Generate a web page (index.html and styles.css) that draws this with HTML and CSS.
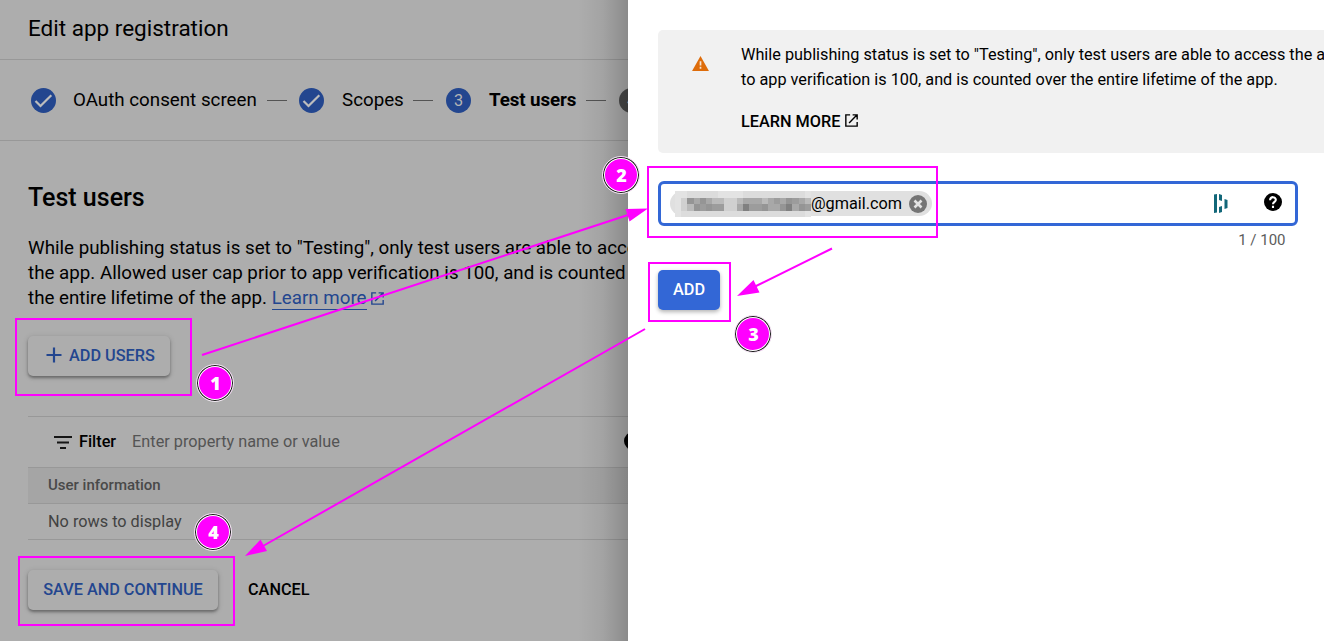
FILE: index.html
```html
<!DOCTYPE html>
<html lang="en">
<head>
<meta charset="utf-8">
<title>Edit app registration</title>
<link rel="stylesheet" href="styles.css">
</head>
<body>
<div class="screen">
  <main class="page">
    <header class="page-header"><h1 class="title">Edit app registration</h1></header>
    <nav class="stepper">
      <svg class="step-dot" viewBox="0 0 25 25"><circle cx="12.5" cy="12.5" r="12.5" fill="#23468f"/><path d="M4.5 13l5 5L20.3 7.2" fill="none" stroke="#bdbdbd" stroke-width="2.2"/></svg>
      <span class="step-label oauth">OAuth consent screen</span><i class="dash"></i>
      <svg class="step-dot" viewBox="0 0 25 25"><circle cx="12.5" cy="12.5" r="12.5" fill="#23468f"/><path d="M4.5 13l5 5L20.3 7.2" fill="none" stroke="#bdbdbd" stroke-width="2.2"/></svg>
      <span class="step-label scopes">Scopes</span><i class="dash"></i>
      <span class="step-dot number">3</span>
      <span class="step-label current">Test users</span><i class="dash"></i>
      <span class="step-dot number next">4</span>
    </nav>
    <section class="content">
      <h2 class="heading">Test users</h2>
      <p class="intro">While publishing status is set to "Testing", only test users are able to access<br>the app. Allowed user cap prior to app verification is 100, and is counted<br>the entire lifetime of the app. <a class="link">Learn more</a> <svg class="ext" viewBox="0 0 14 14"><path d="M5.5.9H.9v12.2h12.2V8.6M8.2.9h4.9v4.9M12.8 1.2L4.4 9.6" fill="none" stroke="currentColor" stroke-width="1.5"/></svg></p>
      <button class="btn raised add-users"><svg class="plus" viewBox="0 0 16 16"><path d="M8 .5v15M.5 8h15" stroke="currentColor" stroke-width="2.2"/></svg>ADD USERS</button>
      <div class="table">
        <div class="filter-row">
          <svg class="filter-icon" viewBox="0 0 18 13"><path d="M0 1h18M3 6.5h12M6 12h6" stroke="#151515" stroke-width="2"/></svg>
          <b class="filter-label">Filter</b><span class="filter-hint">Enter property name or value</span><i class="filter-help"></i>
        </div>
        <div class="table-head">User information</div>
        <div class="table-row">No rows to display</div>
      </div>
      <div class="actions"><button class="btn raised save">SAVE AND CONTINUE</button><button class="btn cancel">CANCEL</button></div>
    </section>
    <div class="edge-shadow"></div>
  </main>
  <aside class="panel">
    <div class="notice">
      <svg class="warn" viewBox="0 0 18 16"><path d="M9 0l9 16H0z" fill="#de6c0a"/><path d="M9 5.5v4.5M9 11.4v2.2" stroke="#f8e3d0" stroke-width="1.8"/></svg>
      <div class="notice-body">
        <p class="notice-text">While publishing status is set to "Testing", only test users are able to access the app. The user cap prior<br>to app verification is 100, and is counted over the entire lifetime of the app.</p>
        <a class="learn">LEARN MORE <svg class="ext" viewBox="0 0 14 14"><path d="M5.5.9H.9v12.2h12.2V8.6M8.2.9h4.9v4.9M12.8 1.2L4.4 9.6" fill="none" stroke="currentColor" stroke-width="1.5"/></svg></a>
      </div>
    </div>
    <div class="field">
      <div class="chip">
        <svg class="mosaic" viewBox="0 0 22 4" preserveAspectRatio="none" shape-rendering="crispEdges">
          <path d="M0 0h22v4H0z" fill="#e3e3e3"/><path d="M2 0h5v1H2zM11 0h10v1H11zM1 3h20v1H1z" fill="#dcdcdc"/>
          <path d="M1 1h1v2H1zM8 1h2v2H8z" fill="#d0d0d0"/>
          <path d="M2 1h6v2H2zM10 1h12v2H10z" fill="#a8a8a8"/>
          <path d="M2 1h1v1H2zM4 1h1v1H4zM3 2h1v1H3zM5 2h1v1H5zM14 2h1v1H14zM18 1h1v1H18zM17 2h1v1H17zM20 2h1v1H20z" fill="#959595"/>
          <path d="M4 2h1v1H4zM6 2h2v1H6zM12 2h2v1H12zM16 1h1v1H16zM19 1h1v1H19zM21 2h1v1H21z" fill="#9c9c9c"/>
          <path d="M11 2h1v1H11zM18 2h1v1H18z" fill="#808080"/>
          <path d="M2 2h1v1H2zM6 1h2v1H6zM10 1h1v1H10zM14 1h1v1H14zM21 1h1v1H21z" fill="#bababa"/>
        </svg>
        <span class="mail">@gmail.com</span>
        <svg class="remove" viewBox="0 0 18 18"><circle cx="9" cy="9" r="9" fill="#757575"/><path d="M5.5 5.5l7 7M12.5 5.5l-7 7" stroke="#e4e4e4" stroke-width="2.6"/></svg>
      </div>
      <svg class="dashlane" viewBox="0 0 14 19"><path d="M0 .5L3 0v18.500l-3 .5zM5 0l3 1v6L5 6zM5 13l3-1v6l-3 1zM10.500 5l3 1v8l-3 1z" fill="#126779"/></svg>
      <svg class="help" viewBox="0 0 18 18"><circle cx="9" cy="9" r="9"/><path d="M6.1 7.2C6.1 3 12 3.4 11.8 7c-.1 1.900-2.800 2-2.800 4.300M9 12.800v2.200" fill="none" stroke="#fff" stroke-width="2.1"/></svg>
    </div>
    <div class="count">1 / 100</div>
    <button class="btn add">ADD</button>
  </aside>
  <svg class="marks" viewBox="0 0 1324 641">
    <g fill="none" stroke="#f0f" stroke-width="2">
      <path d="M16 319h175v76H16zM648 167h289v70H648zM649 263h81v58H649zM19 557h215v68H19z"/>
      <path d="M202 355L634 213M832 248.5L753 287.5M645 329L263 546"/>
    </g>
    <path d="M648 208.5l-18.5 13-4-12.500zM737 296l16.500-16 6 12.500zM245 556l15.500-16.500 6.500 11.500z" fill="#f0f"/>
  </svg>
  <b class="badge one">1</b><b class="badge two">2</b><b class="badge three">3</b><b class="badge four">4</b>
</div>
</body>
</html>
```
FILE: styles.css
```css
* { box-sizing: border-box; }
body { margin: 0; font-family: Roboto, sans-serif; color: #000; }
h1, h2, p { margin: 0; }
svg { display: block; flex: none; }
.screen { position: relative; display: flex; width: 1324px; height: 641px; overflow: hidden; background: #fff; }
.page { position: relative; width: 628px; height: 641px; overflow: hidden; background: #adadad; flex: none; white-space: nowrap; }
.page-header { height: 60px; padding: 13px 28px 0; border-bottom: 1px solid #989898; }
.title { font-size: 22.5px; font-weight: 400; line-height: 30px; }
.stepper { height: 81px; border-bottom: 1px solid #989898; display: flex; align-items: center; padding-left: 31px; }
.step-dot { width: 25px; height: 25px; flex: none; }
.number { border-radius: 50%; background: #23468f; color: #b5b5b5; font-size: 16.25px; line-height: 25px; text-align: center; }
.next { background: #494949; margin-left: 1px; }
.step-label { font-size: 18.75px; line-height: 25px; margin: 0 10px 0 17px; flex: none; }
.oauth { width: 184px; }
.scopes { width: 61px; margin-left: 18px; }
.scopes + .dash { margin-right: 13px; }
.current { width: 87px; font-weight: 700; letter-spacing: -.1px; margin-left: 18px; }
.dash { width: 20px; height: 1px; margin-right: 12px; background: #545454; flex: none; }
.content { padding: 42px 0 0 28px; }
.heading { font-size: 25px; font-weight: 500; line-height: 30px; }
.intro { margin-top: 23px; font-size: 18.75px; line-height: 25px; }
.link { color: #23468f; border-bottom: 1px solid #23468f; }
.intro .ext { color: #23468f; }
.ext { display: inline-block; width: 13px; height: 13px; vertical-align: -1px; }
.btn { border: 0; padding: 0 0 2px; background: none; font: 500 16.25px Roboto, sans-serif; color: #000; border-radius: 5px; height: 40px; }
.raised { color: #23468f; background: #adadad; box-shadow: 0 2px 3px rgba(0,0,0,.35), 0 1px 6px rgba(0,0,0,.12); }
.add-users { display: flex; align-items: center; width: 142px; margin-top: 25px; padding-left: 18px; gap: 7px; }
.plus { width: 16px; height: 16px; }
.table { margin-top: 40px; border-top: 1px solid #989898; }
.filter-row { display: flex; align-items: center; height: 51px; padding: 0 0 2px 26px; border-bottom: 1px solid #989898; font-size: 16.25px; }
.filter-icon { width: 18px; height: 13px; margin-top: 2px; }
.filter-label { width: 38px; margin: 0 16px 0 7px; font-weight: 500; }
.filter-hint { flex: none; width: 480px; color: #545454; }
.filter-help { flex: none; width: 18px; height: 18px; border-radius: 50%; background: #000; margin-left: 12px; }
.table-head { height: 36px; padding-left: 20px; border-bottom: 1px solid #989898; background: #a5a5a5; color: #494949; font-size: 15px; font-weight: 500; line-height: 35px; }
.table-row { height: 36px; padding-left: 20px; border-bottom: 1px solid #989898; color: #424242; font-size: 16.25px; line-height: 35px; }
.actions { display: flex; gap: 30px; margin-top: 30px; }
.save { width: 190px; }
.edge-shadow { position: absolute; inset: 0 0 0 auto; width: 50px; background: linear-gradient(90deg, rgba(0,0,0,0), rgba(0,0,0,.06) 50%, rgba(0,0,0,.2)); }
.panel { width: 696px; padding: 30px 0 0 30px; flex: none; }
.notice { display: flex; height: 123px; padding: 12px 0 0 34px; border-radius: 5px 0 0 5px; background: #f1f1f1; overflow: hidden; }
.warn { width: 17px; height: 15px; margin-top: 14px; }
.notice-body { margin-left: 32px; flex: none; white-space: nowrap; }
.notice-text { font-size: 16.25px; line-height: 25px; }
.learn { display: block; margin-top: 17px; font-size: 16.25px; font-weight: 500; line-height: 25px; }
.learn .ext { margin-left: 1px; vertical-align: 0; }
.field { width: 640px; height: 45px; margin-top: 28px; border: 3px solid #3367d6; border-radius: 6px; display: flex; align-items: center; padding-left: 9px; }
.chip { display: flex; align-items: center; width: 262px; height: 25px; padding-left: 5px; border-radius: 13px; background: #e0e0e0; }
.mosaic { width: 136px; height: 26px; }
.mail { width: 91px; font-size: 16.25px; }
.remove { width: 18px; height: 18px; margin-left: 7px; }
.dashlane { width: 14px; height: 19px; margin-left: 282px; }
.help { width: 18px; height: 18px; margin: -3px 0 0 36px; }
.count { width: 627.5px; margin-top: 4px; font-size: 15px; line-height: 20px; text-align: right; color: #5c5c5c; }
.add { display: block; width: 62px; margin-top: 20px; background: #3367d6; color: #fff; box-shadow: 0 2px 4px rgba(0,0,0,.3); }
.marks { position: absolute; inset: 0; width: 1324px; height: 641px; }
.badge { position: absolute; width: 38px; height: 38px; border-radius: 50%; border: 1px solid #eee; background: #f0f; box-shadow: inset 0 0 0 1px #111, inset 0 0 0 2px #fff; color: #fff; font: 800 18px/37px "Open Sans", "Noto Sans", sans-serif; text-align: center; padding-left: 1px; }
.one { left: 196px; top: 364px; }
.two { left: 602px; top: 156px; }
.three { left: 734px; top: 315px; }
.four { left: 194px; top: 513px; }
```
